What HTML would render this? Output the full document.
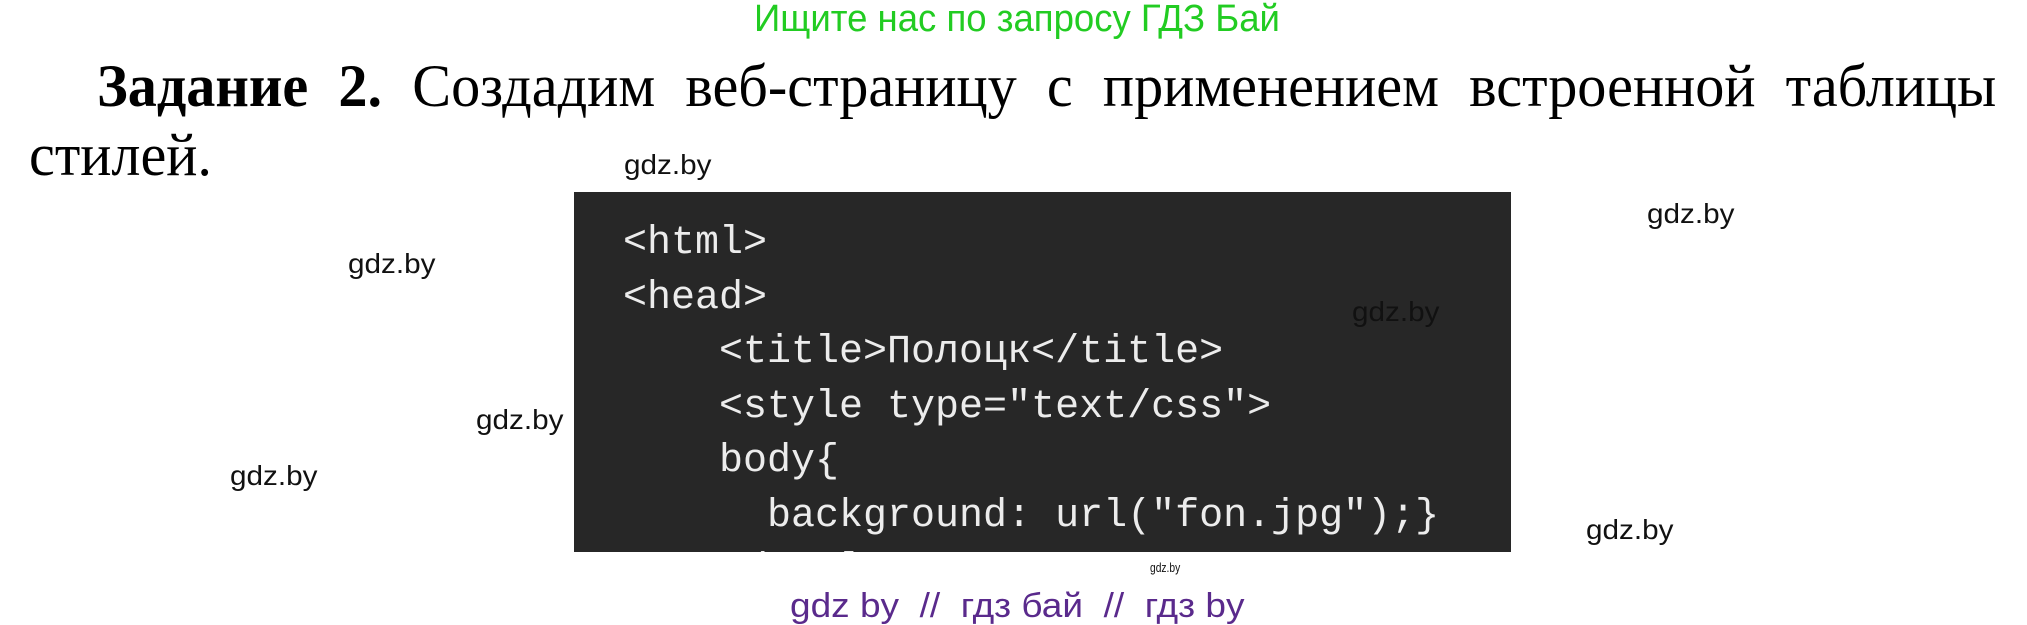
<!DOCTYPE html>
<html><head><meta charset="utf-8">
<style>
html,body{margin:0;padding:0;background:#fff;width:2027px;height:625px;overflow:hidden;position:relative}
.a{position:absolute;white-space:nowrap;transform-origin:0 50%}
.wm{font-family:"Liberation Sans",sans-serif;font-size:28px;color:#111;line-height:28px}
#green{font-family:"Liberation Sans",sans-serif;font-size:38px;color:#22cc22;line-height:38px}
#purple{font-family:"Liberation Sans",sans-serif;font-size:34px;color:#5a2a8c;line-height:34px}
.h{font-family:"Liberation Serif",serif;font-size:60px;line-height:60px;color:#000;transform:scaleX(0.97);transform-origin:0 0}
#l1{left:97px;top:56px;width:1958px;text-align:justify;text-align-last:justify;white-space:normal}
#l2{left:29px;top:125px}
#code{position:absolute;left:574px;top:192px;width:937px;height:360px;background:#272727;overflow:hidden}
#code pre{margin:0;position:absolute;left:49px;top:25px;font-family:"Liberation Mono",monospace;font-size:40px;line-height:54.5px;color:#ececec}
</style></head><body>
<div class="a" id="green" style="left:754px;top:0px">Ищите нас по запросу ГДЗ Бай</div>
<div class="a h" id="l1"><b>Задание 2.</b> Создадим веб-страницу с применением встроенной таблицы</div>
<div class="a h" id="l2">стилей.</div>
<div id="code"><pre>&lt;html&gt;
&lt;head&gt;
    &lt;title&gt;Полоцк&lt;/title&gt;
    &lt;style type="text/css"&gt;
    body{
      background: url("fon.jpg");}
    &lt;/style&gt;</pre></div>
<div class="a wm" style="left:624px;top:151px">gdz.by</div>
<div class="a wm" style="left:1647px;top:200px">gdz.by</div>
<div class="a wm" style="left:348px;top:250px">gdz.by</div>
<div class="a wm" style="left:1352px;top:298px">gdz.by</div>
<div class="a wm" style="left:476px;top:406px">gdz.by</div>
<div class="a wm" style="left:230px;top:462px">gdz.by</div>
<div class="a wm" style="left:1586px;top:516px">gdz.by</div>
<div class="a wm" style="left:1150px;top:561px;font-size:13px;line-height:13px">gdz.by</div>
<div class="a" id="purple" style="left:790px;top:589px">gdz by&nbsp; //&nbsp; гдз бай&nbsp; //&nbsp; гдз by</div>
<script>
function fit(el,w){var n=el.offsetWidth;if(n>0)el.style.transform='scaleX('+(w/n)+')';}
fit(document.getElementById('green'),526);
fit(document.getElementById('purple'),455);
var wms=document.querySelectorAll('.wm');
for(var i=0;i<wms.length;i++){fit(wms[i],i==7?30:88);}
</script>
</body></html>
